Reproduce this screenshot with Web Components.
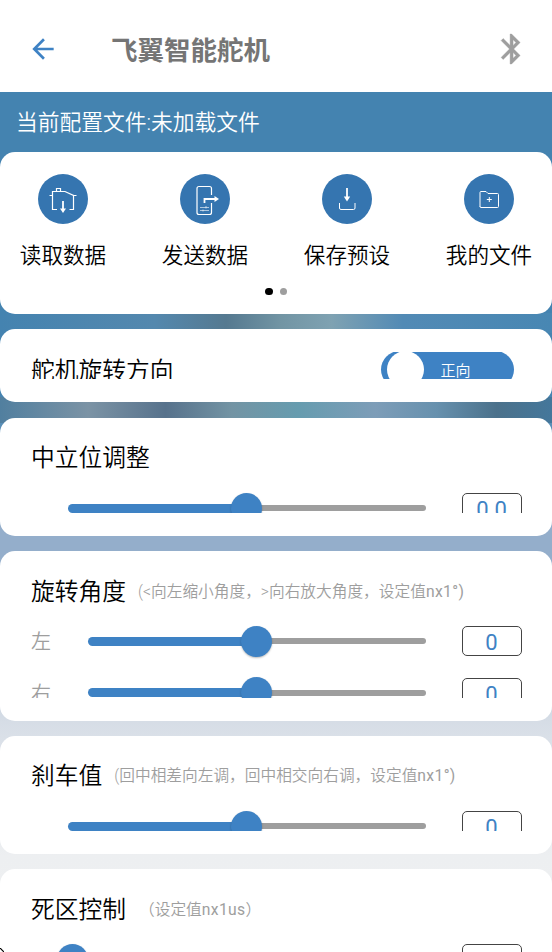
<!DOCTYPE html>
<html lang="zh-CN">
<head>
<meta charset="utf-8">
<title>飞翼智能舵机</title>
<style>
html,body{margin:0;height:952px;overflow:hidden}
body{font-family:"Roboto","Noto Sans CJK SC",sans-serif;font-weight:350;color:#000}
</style>
</head>
<body>
<servo-app></servo-app>
<script>
function define(name, html, init) {
  customElements.define(name, class extends HTMLElement {
    constructor() {
      super();
      this.attachShadow({mode: 'open'}).innerHTML = html;
    }
    connectedCallback() { if (init) init(this, this.shadowRoot); }
  });
}

define('app-header', `<style>
:host{display:flex;align-items:center;height:92px;box-sizing:border-box;background:#fff;padding:6px 26px 0 26.500px}
h1{flex:1;margin:0 0 0 52.500px;font:700 26.5px/40px "Noto Sans CJK SC",sans-serif;color:#757575}
svg{display:block;flex:none}
.back{width:32px;height:32px}
.bt{width:30px;height:36px}
</style>
<svg class="back" viewBox="0 0 24 24"><path fill="#3e82c4" d="M20 11H7.83l5.59-5.59L12 4l-8 8 8 8 1.41-1.41L7.83 13H20z"/></svg>
<h1><slot></slot></h1>
<svg class="bt" viewBox="0 0 20 24"><path fill="#9e9e9e" stroke="#9e9e9e" stroke-width=".25" d="M16.11 7.71 10.400 2H9.400v7.590L4.810 5 3.400 6.410 8.990 12 3.400 17.590 4.810 19 9.400 14.410V22h1l5.710-5.710L11.810 12zM11.400 5.830l1.880 1.880L11.400 9.590zm1.880 10.460L11.400 18.170v-3.760z"/></svg>`);

define('action-button', `<style>
:host{display:flex;flex-direction:column;align-items:center;width:126px}
.disc{width:50px;height:50px;border-radius:50%;background:#3575b0;display:grid;place-items:center}
svg{width:50px;height:50px;fill:none;stroke:#fff;stroke-width:1}
span{margin-top:14px;font-size:21.6px;line-height:36px;white-space:nowrap}
</style>
<div class="disc"></div><span><slot></slot></span>`, (el, root) => {
  const art = {
    read: '<path stroke-width="1.200" d="M19 35.500h-4.500v-18H27l8.500 4v14h-4M11.500 21.500h3M35.500 21.500h3M18.500 17v-2.500h4V17"/><path stroke-width="1.800" d="M25 27v8"/><path fill="#fff" stroke="none" d="M22 34.500h6L25 39z"/>',
    send: '<path stroke-width="1.200" d="M31.500 21v-6.500q0-2-2-2H19q-2 0-2 2V38.500q0 2 2 2h10.500q2 0 2-2V29"/><path stroke-width="1.800" d="M24.500 29v-4H36"/><path fill="#fff" stroke="none" d="M34.500 22v6l4.500-3z"/><path stroke-width=".6" d="M20 33.500h9M20 36.500h9M26 32v2.500M23 35.500v2"/>',
    save: '<path stroke-width="1.800" d="M25 14v9"/><path fill="#fff" stroke="none" d="M21.800 22.500h6.400L25 27.500z"/><path d="M17.500 29v5q0 1.500 1.500 1.500h12.500q1.500 0 1.500-1.500v-5"/>',
    files: '<path d="M16 33v-14.500q0-1 1-1h5l2 2H33.500q1 0 1 1V32.500q0 1-1 1H17q-1 0-1-1M25.300 23v5M22.800 25.500h5"/>'
  };
  root.querySelector('.disc').innerHTML = `<svg viewBox="0 0 50 50">${art[el.getAttribute('icon')]}</svg>`;
});

define('action-card', `<style>
:host{display:flex;flex-direction:column;box-sizing:border-box;height:162px;padding-top:22px;background:#fff;border-radius:15px}
.row{display:flex;justify-content:space-between;gap:16px}
.dots{display:flex;justify-content:center;gap:7px;margin-top:14px}
i{width:7.500px;height:7.500px;border-radius:50%;background:#9e9e9e}
i:first-child{background:#000}
</style><div class="row"><slot></slot></div><div class="dots"><i></i><i></i></div>`);

define('setting-card', `<style>
:host{display:block;box-sizing:border-box;padding:23px 30px;background:#fff;border-radius:15px}
.clip{height:100%;overflow:hidden}
.head{display:flex;align-items:center;height:35px;margin-bottom:6.500px;white-space:nowrap}
.title{font-size:23.750px;line-height:35px;margin-left:1px;padding-top:1px}
:host([compact]) .title{padding-top:4px}
.hint{font-size:15.700px;line-height:24px;color:#9e9e9e;margin-left:12px}
.hint b{font-weight:400;letter-spacing:.35px}
:host([wide]) .hint{margin-left:13px}
:host(:not([hint])) .hint{display:none}
</style><div class="clip"><div class="head"><span class="title"></span><span class="hint"></span><slot name="control"></slot></div><slot></slot></div>`, (el, root) => {
  root.querySelector('.title').textContent = el.getAttribute('heading');
  const [text, unit = ''] = (el.getAttribute('hint') || '').split('|');
  const b = document.createElement('b');
  b.textContent = unit.replace('）', '');
  root.querySelector('.hint').append(text, b, unit.includes('）') ? '）' : '');
});

define('direction-switch', `<style>
:host{display:flex;align-items:center;box-sizing:border-box;width:133px;height:37px;border-radius:19px;background:#3e82c4;color:#fff;padding-left:5.500px;font-size:15px;gap:17px}
i{width:37px;height:37px;border-radius:50%;background:#fff}
span{padding-top:1px}
</style><i></i><span><slot></slot></span>`);

define('value-slider', `<style>
:host{display:flex;align-items:center;height:51.500px}
.label{font-size:20px;line-height:30px;color:#9e9e9e;margin-left:1px;width:36.500px;padding-top:2px}
:host([label]) .label{width:57.200px}
.track{flex:1;display:flex;align-items:center;height:31px}
.on{height:9px;border-radius:5px 0 0 5px;background:#3e82c4;width:var(--at)}
.thumb{flex:none;width:31px;height:31px;border-radius:50%;background:#3e82c4;box-shadow:0 1px 2px #0004;margin:0 -15.500px;z-index:1}
.off{flex:1;height:6px;border-radius:0 3px 3px 0;background:#9e9e9e}
.box{box-sizing:border-box;width:60px;height:30px;border:1px solid #444;border-radius:5px;margin:0 .5px 0 36px;text-align:center;color:#3e82c4;font-weight:400;font-size:22px;line-height:31px}
</style><span class="label"></span><div class="track"><div class="on"></div><div class="thumb"></div><div class="off"></div></div><div class="box"><slot></slot></div>`, (el, root) => {
  root.querySelector('.label').textContent = el.getAttribute('label') || '';
  el.style.setProperty('--at', el.getAttribute('at') + 'px');
});

define('servo-app', `<style>
:host{display:flex;flex-direction:column;position:relative;width:552px;height:952px;overflow:hidden}
.page{flex:1;min-height:0;overflow:hidden;display:flex;flex-direction:column;gap:15.300px;
background:
linear-gradient(90deg,#4483b0,#5488ae 28%,#557990 41%,#7295a4 51%,#7fa2b2 60%,#528ab5 73%,#4887b3) 0 221px/100% 20px no-repeat,
linear-gradient(90deg,#517f9f,#7b93a5 16%,#57728c 30%,#7394a4 42%,#669caf 54%,#7d9db8 68%,#6791ae 79%,#4b718b 90%,#44779b) 0 305px/100% 26px no-repeat,
linear-gradient(#4483b0 0 300px,#94aecb 425px,#94aecb 465px,#d6dde6 630px,#dae0e8 645px,#edeff1 765px,#f0f1f2)}
.status{height:59.700px;box-sizing:border-box;padding:15px 16px 0;color:#fff;font-size:21.750px;line-height:32px;margin-bottom:-15.300px}
.page>*{flex:none}
.corner{position:absolute;left:0;bottom:0;width:4px;height:4px}
</style>
<app-header>飞翼智能舵机</app-header>
<div class="page">
<div class="status">当前配置文件:未加载文件</div>
<action-card>
<action-button icon="read">读取数据</action-button><action-button icon="send">发送数据</action-button><action-button icon="save">保存预设</action-button><action-button icon="files">我的文件</action-button>
</action-card>
<setting-card compact heading="舵机旋转方向" style="height:73.500px"><direction-switch slot="control" style="margin-left:auto;margin-right:8px">正向</direction-switch></setting-card>
<setting-card heading="中立位调整" style="height:118px"><value-slider at="179">0.0</value-slider></setting-card>
<setting-card heading="旋转角度" hint="(&lt;向左缩小角度，&gt;向右放大角度，设定值|nx1°)" style="height:169.500px"><value-slider label="左" at="168.500">0</value-slider><value-slider label="右" at="168.500">0</value-slider></setting-card>
<setting-card heading="刹车值" hint="(回中相差向左调，回中相交向右调，设定值|nx1°)" style="height:118px"><value-slider at="179">0</value-slider></setting-card>
<setting-card heading="死区控制" hint="（设定值|nx1us）" wide style="height:118px"><value-slider at="5">0</value-slider></setting-card>
</div>
<svg class="corner" viewBox="0 0 4 4"><path d="M0 0L4 4" stroke="#000" stroke-width="1.200"/></svg>`);
</script>
</body>
</html>
